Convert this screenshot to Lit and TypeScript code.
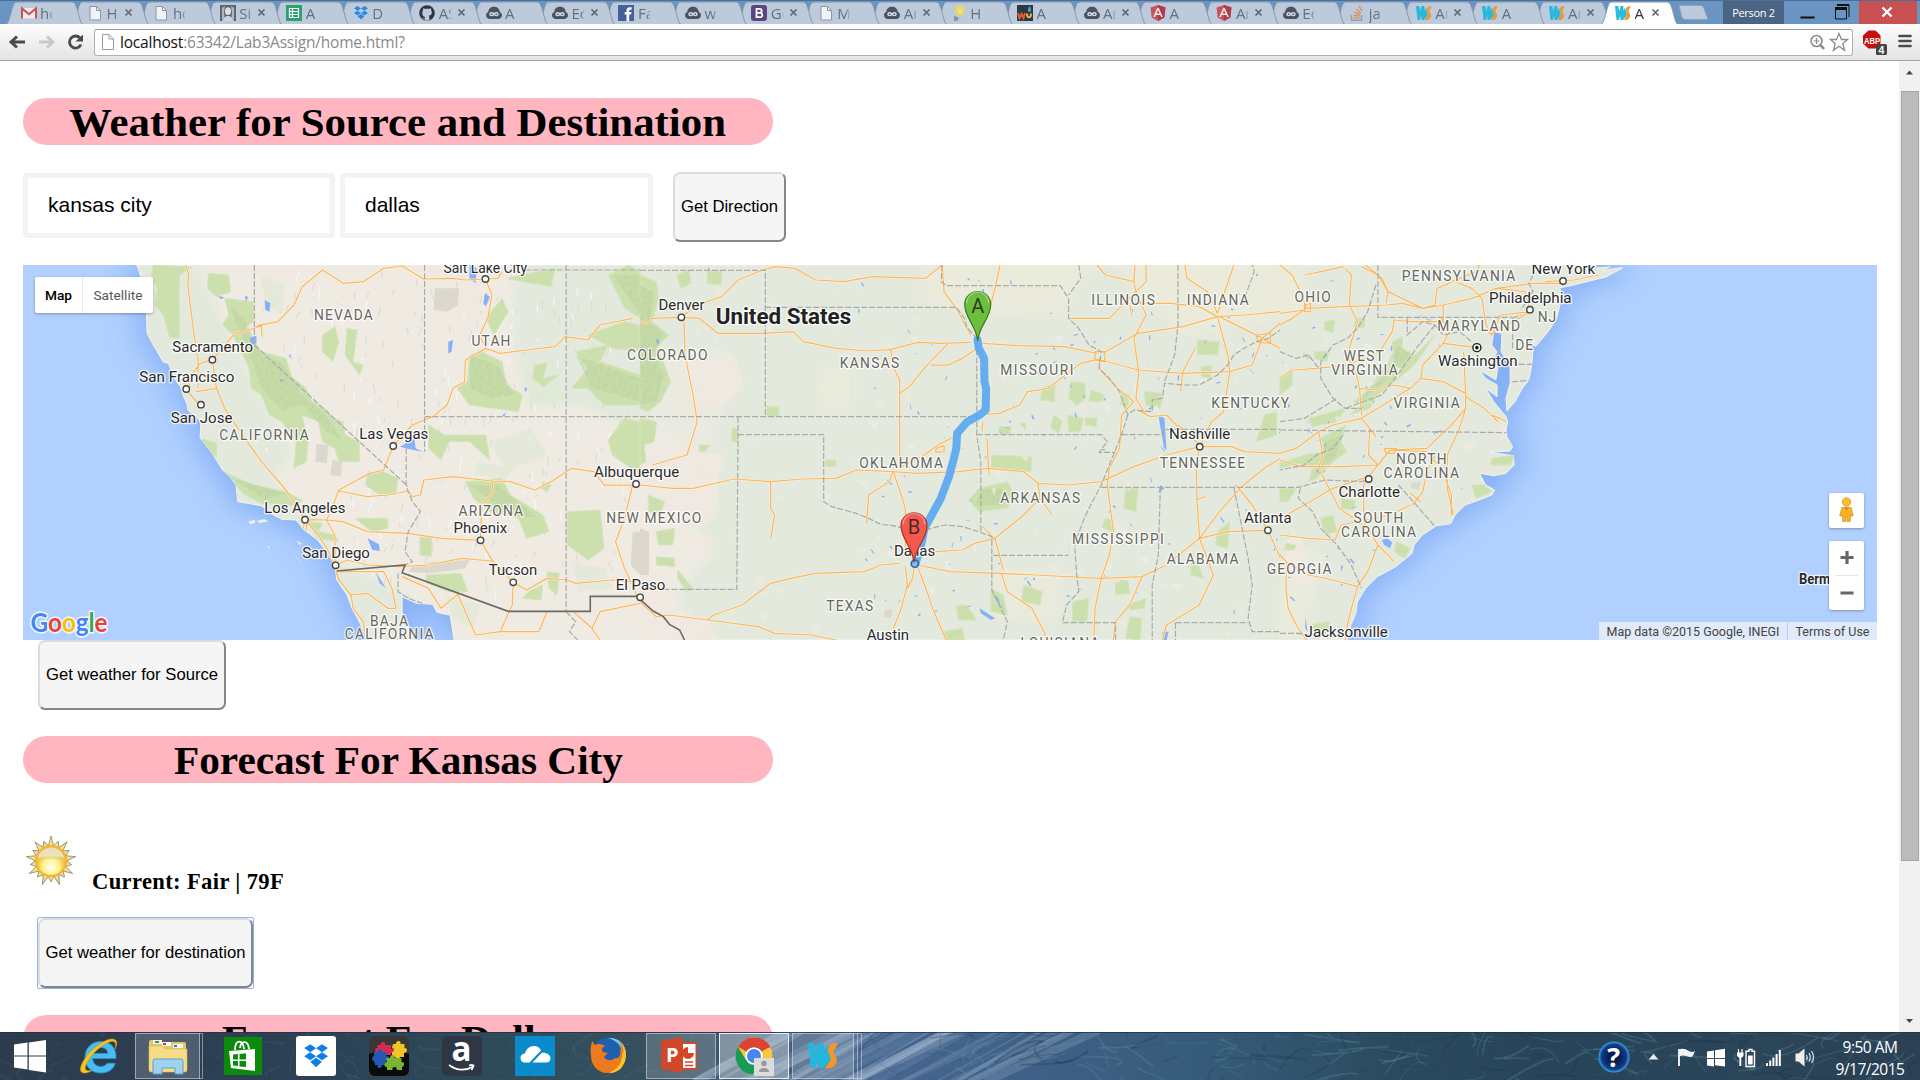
import { LitElement, html, svg, css, TemplateResult } from "lit";
import { customElement } from "lit/decorators.js";

/* ---------- small drawing helpers ---------- */

const rnd = (seed: number) => () => {
  seed = (seed * 1664525 + 1013904223) % 4294967296;
  return seed / 4294967296;
};

/* ---------- tab strip ---------- */

type Tab = { icon: string; text: string; close?: boolean; active?: boolean };
const TABS: Tab[] = [
  { icon: "gmail", text: "ho" }, { icon: "page", text: "Ho", close: true }, { icon: "page", text: "ho" },
  { icon: "photo", text: "Si", close: true }, { icon: "sheet", text: "A" }, { icon: "dropbox", text: "D" },
  { icon: "github", text: "AS", close: true }, { icon: "cloud", text: "A" }, { icon: "cloud", text: "Ec", close: true },
  { icon: "fb", text: "Fa" }, { icon: "cloud", text: "w" }, { icon: "boot", text: "Ge", close: true },
  { icon: "page", text: "M" }, { icon: "cloud", text: "An", close: true }, { icon: "bulb", text: "H" },
  { icon: "wu", text: "A" }, { icon: "cloud", text: "An", close: true }, { icon: "ng", text: "A" },
  { icon: "ng", text: "An", close: true }, { icon: "cloud", text: "Ec" }, { icon: "so", text: "ja" },
  { icon: "ws", text: "An", close: true }, { icon: "ws", text: "A" }, { icon: "ws", text: "An", close: true },
  { icon: "ws", text: "A", close: true, active: true },
];

const dropboxShape = (c: string) => svg`<path fill=${c} d="M4.6 1 8 3.4 4.5 5.7 1 3.3zM11.4 1 15 3.3 11.5 5.7 8 3.4zM1 8.1 4.5 5.7 8 8.1 4.6 10.5zM15 8.1 11.5 5.7 8 8.1 11.4 10.5zM4.6 11.3 8 9 11.4 11.3 8 14.6z"/>`;
const wsShape = svg`<path fill="#23b7dc" d="M0 0h3.4l.7 5L5.600 0h2.600l.5 5L9.800 1.500 12 9l-4 5H5.600L5 10l-1.200 4H1.500z"/><path fill="#f0982b" d="M15.800.2h-2.600C10.500 1.200 9.700 4.500 11.300 6.400c1.200 1.800.8 3.200-.6 4.600L9 14h2.800c3-1 4.300-4.500 2.600-6.700-1.300-1.800-.9-3.300.2-4.600z"/>`;

const FAV: Record<string, TemplateResult> = {
  gmail: svg`<path d="M1 3h14v10.500H1z" fill="#eee"/><path d="M1 13.500v-10l7 5.800 7-5.800v10" fill="none" stroke="#cc4b46" stroke-width="2"/>`,
  page: svg`<path d="M3 1.500h6.500L13.500 5.500v9.500H3z" fill="#f2f5f9" stroke="#8d949c"/><path d="M9.500 1.500v4h4" fill="none" stroke="#8d949c"/>`,
  photo: svg`<path d="M0 0h16v16H0z" fill="#5b6168"/><path d="M2 3l3-2-1 6 1 9H2zM11 1l3 2v13h-3l1-8z" fill="#aeb6bf"/><path d="M5 6c0-5 6-5 6 0 0 3-1 4-3 4S5 9 5 6z" fill="#dfe3e8"/><path d="M3.500 16c0-3.500 2-5 4.500-5s4.500 1.500 4.500 5z" fill="#cfd5dc"/>`,
  sheet: svg`<path d="M0 0h16v16H0z" fill="#23a06a"/><path d="M3.500 3.500h9v9h-9zM3.500 6.500h9M3.500 9.500h9M6.500 3.500v9" fill="none" stroke="#fff" stroke-width="1.200"/>`,
  dropbox: dropboxShape("#1f87e6"),
  github: svg`<circle cx="8" cy="8" r="7.800" fill="#2a2e33"/><path fill="#bccadb" d="M8 3.700c.8 0 1.500.1 2 .3 1-.7 1.700-.7 1.900-.6.3.7.200 1.200.1 1.600.9 1 1 2.700.5 4-.5 1.200-1.700 1.600-2.700 1.700.4.600.5 1 .5 1.800v3H5.700v-1.500C4 14.200 3.600 13 3 12.500c1-.2 1.500 1.300 2.800 1 0-.8.100-1.200.5-1.600-1-.2-2.300-.7-2.700-2C3 8 3.300 6 4.100 5c-.1-.4-.2-1 .1-1.600.2-.1.900-.1 1.800.6.600-.2 1.200-.3 2-.3z"/>`,
  cloud: svg`<path d="M4 14C1.500 14 0 12.300 0 10.300 0 8.500 1 7.500 2.300 7 2.300 3.800 4.800 1.800 8 1.800S13.700 3.800 13.700 7C15 7.500 16 8.500 16 10.300c0 2-1.500 3.700-4 3.700z" fill="#464e58"/><path d="M8 9.200C7 7.500 4 7.200 4 9.200s3 1.700 4 0c1-1.700 4-2 4 0s-3 1.700-4 0z" fill="none" stroke="#d9e0e8" stroke-width="1.400"/>`,
  fb: svg`<path d="M0 0h16v16H0z" fill="#3e5c9a"/><path d="M8.500 16V9.500H6.700V7h1.800V5.500C8.500 3.500 9.700 2.300 11.600 2.300h2v2.400h-1.400c-.8 0-1 .4-1 1.100V7h2.300l-.4 2.500h-1.900V16z" fill="#fff"/>`,
  boot: svg`<rect width="16" height="16" rx="3" fill="#563d7c"/><path d="M5.500 3.800h3.200a2 2 0 0 1 0 4H5.500zM5.500 7.800h3.600a2.200 2.200 0 0 1 0 4.400H5.500z" fill="none" stroke="#fff" stroke-width="1.800"/>`,
  bulb: svg`<circle cx="8.800" cy="5.500" r="5.300" fill="#ecd564"/><path d="M7 4l2 4 1.800-4" stroke="#fff3a8" fill="none"/><path d="M3 10.500l5 2.500-2 3H3z" fill="#8c9299"/>`,
  wu: svg`<path d="M0 0h16v16H0z" fill="#26323c"/><path d="M1 8l1.500 5L4.500 9l2 4L8 8" fill="none" stroke="#e2572d" stroke-width="2"/><path d="M10 8.500c0 5 4 5 4 0" fill="none" stroke="#f2b632" stroke-width="2"/><path d="M12.500 1c2 3 2.200 6 0 6s-2-3 0-6z" fill="#3aa7e0"/>`,
  ng: svg`<path d="M8 0l7.500 2.600-1.200 10L8 16l-6.300-3.400L.5 2.600z" fill="#c94a55"/><path d="M8 0l7.500 2.600-1.200 10L8 16z" fill="#b03540"/><path d="M8 3.200 4 12M8 3.200 12 12M5.800 9.200h4.500" stroke="#f4e6e8" stroke-width="1.600" fill="none"/>`,
  so: svg`<path d="M2.500 10v5.200h10V10" fill="none" stroke="#9b9b9b" stroke-width="1.400"/><path d="M4.500 12.800h6M4.600 10.300l6 .7M5.400 7.400l5.600 2M7.200 4.200l4.800 3.700M10 1.200l3.300 5" stroke="#e08a4e" stroke-width="1.300" fill="none"/>`,
  ws: svg`<g transform="translate(0 1)">${wsShape}</g>`,
};

/* ---------- map data: three side-by-side sheets, each 1568 x 1200 units ---------- */

type Label = [number, string, number, number, number, string];
const LABELS: Label[] = [
  [0, "Salt Lake City", 1086, 1291, 54, "city"], [0, "NEVADA", 769, 913, 196, "state"], [0, "UTAH", 1155, 1250, 273, "state"],
  [0, "Sacramento", 422, 620, 292, "city"], [0, "San Francisco", 341, 574, 381, "city"], [0, "San Jose", 418, 569, 503, "city"],
  [0, "CALIFORNIA", 537, 756, 554, "state"], [0, "Las Vegas", 880, 1049, 551, "city"], [0, "Albuquerque", 1455, 1664, 666, "city"],
  [0, "ARIZONA", 1123, 1281, 784, "state"], [0, "Phoenix", 1111, 1242, 835, "city"], [0, "Los Angeles", 647, 846, 773, "city"],
  [0, "San Diego", 740, 906, 909, "city"], [0, "Tucson", 1197, 1316, 959, "city"], [0, "El Paso", 1508, 1630, 1005, "city"],
  [0, "BAJA", 906, 999, 1112, "state"], [0, "CALIFORNIA", 844, 1062, 1153, "state"], [0, "NEW MEXICO", 1485, 1718, 805, "state"],
  [0, "COLORADO", 1536, 1733, 315, "state"],
  [1, "Denver", 45, 158, 165, "city"], [1, "United States", 185, 517, 208, "country"], [1, "KANSAS", 489, 635, 338, "state"],
  [1, "MISSOURI", 882, 1062, 361, "state"], [1, "ILLINOIS", 1105, 1261, 150, "state"], [1, "INDIANA", 1339, 1491, 150, "state"],
  [1, "KENTUCKY", 1399, 1590, 458, "state"], [1, "Nashville", 1296, 1446, 553, "city"], [1, "TENNESSEE", 1273, 1482, 638, "state"],
  [1, "OKLAHOMA", 537, 742, 638, "state"], [1, "ARKANSAS", 882, 1078, 743, "state"], [1, "MISSISSIPPI", 1058, 1283, 867, "state"],
  [1, "ALABAMA", 1290, 1466, 927, "state"], [1, "GEORGIA", 1535, 1694, 958, "state"], [1, "Atlanta", 1480, 1596, 804, "city"],
  [1, "TEXAS", 456, 571, 1068, "state"], [1, "Austin", 555, 659, 1154, "city"], [1, "LOUISIANA", 932, 1125, 1179, "state"],
  [1, "Dallas", 622, 723, 903, "city"],
  [2, "OHIO", 35, 124, 140, "state"], [2, "PENNSYLVANIA", 298, 576, 78, "state"], [2, "New York", 616, 772, 57, "city"],
  [2, "Philadelphia", 512, 714, 143, "city"], [2, "NJ", 631, 676, 201, "state"], [2, "MARYLAND", 385, 588, 228, "state"],
  [2, "DE", 576, 620, 285, "state"], [2, "WEST", 156, 254, 318, "state"], [2, "VIRGINIA", 125, 288, 360, "state"],
  [2, "Washington", 387, 582, 334, "city"], [2, "VIRGINIA", 278, 440, 458, "state"], [2, "NORTH", 284, 408, 627, "state"],
  [2, "CAROLINA", 253, 438, 669, "state"], [2, "Charlotte", 143, 294, 726, "city"], [2, "SOUTH", 180, 302, 805, "state"],
  [2, "CAROLINA", 149, 333, 847, "state"], [2, "Jacksonville", 60, 264, 1147, "city"], [2, "Berm", 1271, 1348, 988, "bold"],
];
const DOTS: [number, number, number][] = [
  [0, 1189, 72], [0, 520, 314], [0, 456, 402], [0, 492, 449], [0, 963, 573], [0, 1558, 687], [0, 747, 794], [0, 1177, 856],
  [0, 822, 931], [0, 1257, 982], [0, 1568, 1027], [1, 101, 187], [1, 1371, 575], [1, 1538, 826], [2, 693, 78], [2, 612, 164],
  [2, 217, 672],
];
const px = (k: number, x: number) => (x + 1568 * k - 56) / 2.45;
const py = (y: number) => (y - 30) / 3;

const LAND = "M335 30 350 85 347 130 358 170 360 235 375 270 385 290 400 322 412 325 428 372 442 395 448 420 458 448 460 465 492 498 490 548 520 595 545 645 563 665 578 690 582 740 640 752 670 780 690 793 725 795 745 825 778 855 800 890 820 930 825 975 850 1020 862 1060 880 1100 900 1155H1015L1000 1120 985 1085 985 1025 1020 1045 1060 1048 1070 1072 1102 1080 1108 1120 1112 1155H3300L3310 1110 3322 1075 3326 1040 3346 1000 3375 965 3420 935 3460 895 3465 870 3485 840 3520 812 3555 806 3565 780 3590 750 3625 735 3655 720 3662 705 3640 690 3625 655 3660 662 3690 655 3710 630 3708 602 3650 592 3700 588 3706 575 3692 545 3690 525 3694 500 3690 485 3660 440 3640 400 3668 425 3668 390 3640 370 3625 345 3665 375 3670 340 3660 310 3668 290 3655 270 3660 230 3680 235 3678 290 3700 335 3700 385 3690 430 3692 468 3712 440 3730 400 3746 375 3753 330 3756 285 3745 258 3728 230 3762 275 3774 258 3796 225 3814 190 3822 150 3826 118 3822 98 3850 92 3895 78 3935 66 3962 48 3976 38 3950 42 3925 48 3945 36 3900 40 3885 30Z";

const SHEET_FOREST = [
  "M375 30 470 35 440 60 438 120 440 250 415 248 400 180 378 150 385 100 370 60ZM510 55 560 60 565 110 530 125 508 100ZM550 130 620 140 622 200 600 215 640 290 700 310 715 365 750 400 765 440 800 465 815 490 840 500 845 540 880 560 880 620 830 620 820 580 790 560 780 500 740 480 755 560 750 620 720 640 725 560 690 500 660 480 640 420 615 400 610 340 570 240 545 210 560 180ZM540 645 620 690 700 710 740 735 725 752 640 745 600 720ZM495 550 530 565 530 605 500 590ZM900 660 930 645 975 670 970 715 930 720 895 690ZM790 240 820 215 830 260 815 320 790 290ZM850 220 875 225 865 320 890 330 880 360 845 300ZM870 790 950 790 950 820 910 830ZM1030 846 1058 848 1056 905 1028 900ZM1045 960 1130 955 1145 1010 1100 1010 1045 985ZM1140 680 1230 670 1250 720 1290 750 1330 780 1345 830 1290 850 1270 790 1200 770 1160 730ZM1050 510 1090 540 1190 540 1200 615 1150 560 1100 560 1080 615 1050 580ZM1120 400 1145 380 1150 300 1180 290 1230 320 1240 390 1280 420 1270 470 1150 450ZM1190 190 1230 130 1245 170 1210 240ZM1240 70 1360 40 1350 95 1280 80ZM1410 290 1490 270 1470 320 1568 360V450L1480 450 1440 400 1400 400 1440 340ZM1440 240 1530 200 1568 210V290L1500 280ZM1390 770 1470 765 1480 880 1440 915 1390 870ZM1490 555 1530 490 1568 500V660L1500 600ZM1310 330 1340 325 1330 370 1370 360 1330 395 1305 370ZM1490 60 1540 30 1568 50V190L1530 160 1510 110ZM1300 1005 1330 990 1325 1035 1280 1030ZM750 800 790 805 780 830 820 840 830 860 780 850ZM1340 950 1370 955 1365 1020 1345 1000ZM1330 680 1350 690 1340 712 1325 700Z",
  "M0 60 40 80 45 130 30 200 70 240 40 280 60 330 75 380 50 440 20 470 0 460ZM90 60 120 45 125 85 100 100ZM165 48 200 48 200 90 165 85ZM0 490 40 500 35 560 10 570 15 620 0 630ZM20 720 60 740 50 780 20 770ZM40 830 85 820 80 870 45 870ZM40 905 85 910 85 935 40 930ZM92 945 130 1000 115 1010 92 970ZM310 455 340 455 340 485 310 485ZM225 520 240 520 240 560 225 560ZM455 615 480 615 480 638 455 635ZM985 400 1018 385 1015 440 980 435ZM1055 380 1090 385 1092 430 1070 450 1050 430ZM1105 405 1138 420 1130 440 1100 440ZM1015 480 1035 500 1025 535 1005 515ZM1048 480 1085 490 1080 530 1050 530ZM1090 488 1120 490 1118 515 1092 510ZM880 515 910 515 905 540 880 535ZM930 505 945 505 945 525ZM862 600 960 605 958 650 860 640ZM830 700 900 680 920 720 900 760 830 770 805 735ZM1365 255 1420 260 1415 300 1365 298ZM1375 335 1400 330 1398 370 1375 365ZM1235 410 1280 415 1275 460 1240 450ZM1180 410 1200 420 1195 455 1178 450ZM1190 700 1220 700 1215 770 1185 760ZM1140 790 1160 795 1155 830 1132 815ZM1415 830 1445 800 1440 880 1410 870ZM1530 480 1560 470 1560 540 1510 560ZM1060 1040 1100 1030 1095 1100 1060 1100ZM940 990 985 1010 980 1050 935 1040ZM860 1000 890 1020 900 1080 860 1070ZM775 1050 800 1050 825 1095 780 1095ZM1200 1085 1230 1090 1225 1155 1190 1150ZM1165 985 1195 975 1200 1015 1165 1020ZM745 1130 790 1120 795 1155 745 1155ZM1350 920 1365 920 1380 970 1350 960ZM1195 1050 1240 1030 1235 1060 1200 1065ZM145 570 170 570 160 590 145 590Z",
  "M110 200 135 195 130 235 108 225ZM185 190 210 190 205 220 180 215ZM275 260 300 245 300 280 330 300 320 340 260 400 200 450 180 440 250 370 280 320ZM380 240 330 330 240 420 220 460 170 480 200 450 260 400 300 340ZM85 290 120 290 115 320 85 310ZM55 295 75 300 70 315ZM0 370 30 340 30 390 0 420ZM70 490 160 460 140 500 80 515ZM100 550 160 510 150 560 165 590 130 620 90 670 70 680 80 640 45 625 0 640V625L60 600 110 590ZM470 690 500 690 520 710 480 730ZM520 610 575 600 565 630 515 630ZM100 790 130 780 140 830 110 840ZM150 730 185 735 180 765 150 760ZM285 860 320 880 305 910 280 890ZM15 865 40 870 35 885 10 885ZM0 700 40 700 20 740 0 740ZM70 1110 120 1100 125 1145 90 1140Z",
];
const SHEET_BEIGE = [
  "M1160 60 1180 70 1170 160 1120 170 1130 110ZM1045 30 1075 30 1060 95Z",
  "M100 290 150 300 240 310 250 400 200 450 140 460 120 400ZM0 640 60 560 110 530 110 600 80 650 100 760 60 800 40 720ZM0 300 30 350 20 460 0 440ZM90 590 130 590 210 600 190 670 190 760 160 820 100 790 110 700ZM130 830 180 850 170 930 120 900ZM0 930 60 960 80 1060 170 1100 190 1155 0 1155Z",
  "M560 505 545 560 530 540ZM440 570 480 560 470 590ZM20 850 50 840 90 990 40 1000 10 900Z",
];
const SHEET_GREY = [
  "M1065 100 1125 100 1122 150 1095 170 1062 165ZM775 567 805 570 800 625 772 620ZM815 615 838 620 835 665 808 660ZM1010 935 1060 920 1150 915 1140 940 1060 955 1000 950ZM1550 830 1568 830V960L1545 930Z",
  "M0 820 22 830 22 960 0 960ZM600 1065 620 1065 615 1090 598 1085Z",
  "M320 685 345 680 340 705 322 700Z",
];
const SHEET_LAKE = [
  "M648 135 662 145 660 170 650 165ZM1150 30 1168 40 1165 85 1150 70ZM1188 115 1200 125 1190 155 1184 145ZM1098 260 1110 255 1106 290 1098 296ZM900 850 928 868 930 888 912 885ZM612 248 628 242 628 265 614 270ZM920 950 945 1000 930 985ZM980 575 1015 550 1018 580 1035 590 1000 582ZM535 122 550 128 540 132ZM600 122 608 126 602 140ZM1230 480 1240 472 1235 485ZM1285 395 1292 402 1286 412ZM455 408 470 420 488 445 480 440ZM685 372 696 374 688 382ZM710 295 714 310 708 305Z",
  "M832 1060 870 1090 860 1095 835 1075ZM865 1015 878 1030 885 1060ZM1270 480 1285 490 1290 585 1284 580ZM1275 690 1285 700 1270 715ZM1280 1130 1295 1130 1290 1155 1280 1155ZM1050 890 1055 855 1048 900ZM38 250 48 260 42 268Z",
  "M250 855 262 850 275 862 270 880 255 870ZM62 1085 68 1130 62 1120ZM150 930 155 935 150 950ZM375 530 400 525 385 535ZM90 640 98 655 90 652Z",
];
const SHEET_ROAD = [
  "M455 30 462 60 460 90 475 240 485 310M520 314 490 325 475 350 460 400M485 310 485 400M520 314 530 400 480 410M456 402 480 440 492 449M530 400 550 460 600 550 640 620 690 690 715 730 747 794M640 212 600 230 575 235 530 300 520 314M630 212 680 200 720 150 740 95 790 45 840 85 890 80 940 40 985 33 1038 72 1110 70 1140 75 1189 72 1220 70 1230 50M1189 72 1205 120 1195 190 1175 240 1190 280 1140 315 1138 380 1110 400 1095 450 1060 485 1010 510 963 573 940 645 905 655 830 705 810 770 800 795 747 794M1190 280 1225 295 1290 285 1360 275 1385 245 1440 255 1470 210 1550 190M830 708 900 725 950 720 1000 708 1010 725 1030 720 1038 675 1110 665 1205 678 1250 680 1310 705 1350 680 1400 640 1455 650 1480 690 1550 690M1205 678 1208 715 1180 750 1177 856M800 795 840 800 900 830 1000 835 1080 850 1177 856 1205 915 1257 982 1290 1005 1340 970 1390 975 1410 985 1500 975 1550 980M1205 918 1130 910 1050 930 980 935 900 930 850 915 822 931M747 794 780 840 800 880 822 931M800 795 820 840 822 930M747 800 742 820M752 800 750 825M822 945 830 975 860 1020 865 1060 890 1100 895 1155M860 1020 900 1015 950 1060 970 1060 960 1000 940 950 830 950M1125 1015 1080 1060 1050 1000 985 965M1257 990 1255 1050 1225 1130 1165 1140 1120 1015M1340 1070 1320 1130 1270 1130 1225 1130M1405 1070 1450 1120 1470 1070 1568 1045M1450 1120 1470 1155M1550 690 1530 790 1508 860 1530 940 1560 1020M640 212 642 245",
  "M0 200 20 205 30 190 101 187 140 150 200 125 240 75 300 45 330 35 380 40 430 75 500 80 570 65 700 70 740 30M101 187 145 190 190 235 300 235 375 230 400 260 480 280 560 288 615 283 680 262 740 265 810 262M108 200 110 300 130 420 140 500 115 600 30 630M810 240 780 170 745 110 740 30M850 190 870 100 882 30M615 283 618 330 636 375 636 640M636 415 660 395 700 335 755 265M820 285 790 310 755 330 712 330M840 265 930 272 1040 275 1120 295M1130 310 1080 325 1000 400 950 410 930 450 880 475 845 478M0 690 80 700 130 700 230 672 320 680 400 672 480 670 530 645 620 650 680 655 780 650 850 640 940 650 975 685 1050 690 1130 680 1210 635 1290 600 1371 575 1450 575 1480 590 1568 595M320 680 320 760 330 780 320 850M620 650 610 680 560 720 555 805M622 655 640 720 650 760 650 905M632 640 690 605 730 570 770 545M725 580 745 572 745 590 725 592 725 580M850 550 855 660M840 500 838 530M975 685 980 730 1010 780M980 730 940 780 870 850 820 865 790 885 720 890M870 850 890 945M840 815 870 855M680 930 760 950 880 955 970 960 1130 970 1230 965 1290 930 1371 850 1440 830 1538 826M635 925 590 930 550 950 430 955 370 970 320 985 250 1050 180 1080 165 1095 70 1080 40 1085 0 1040M165 1095 290 1115 330 1135 420 1140 480 1155M650 935 655 990 640 1060 610 1155M672 935 668 970 655 1000M680 935 700 1000 720 1070 750 1155M885 955 900 1010 960 1060 1000 1155M1130 970 1150 900 1160 830 1145 690 1150 640 1175 580 1180 480 1210 440 1170 400 1125 340 1125 310M1130 970 1115 1060 1112 1155M1230 965 1200 1050 1165 1100 1160 1155M1371 850 1405 960 1370 1050 1290 1110 1280 1155M1371 850 1365 740 1363 640 1371 575M1363 735 1385 725M1371 850 1420 770 1470 700 1530 640 1568 610M1371 575 1400 500 1430 470 1445 350 1440 300 1415 185M1320 510 1371 570M1220 465 1250 485 1290 480 1330 530M1210 80 1215 110 1150 190 1055 190M1215 110 1240 180 1210 250 1222 350 1215 430 1240 480M1120 30 1140 60 1210 80 1213 30M1215 110 1240 80 1240 30M1215 145 1300 145 1370 155 1415 185 1480 180 1568 170M1135 295 1220 235 1330 215 1415 185M1130 315 1220 345 1330 355 1445 350 1500 330 1525 250 1420 185M1335 30 1340 70 1390 110 1415 175 1430 120 1455 30M1325 408 1330 350 1360 280M1525 250 1568 205M1525 250 1568 280M1538 826 1500 750 1460 690M1538 826 1568 905M1510 240 1545 235 1545 265 1515 262ZM1115 290 1140 290 1138 320 1115 315ZM1200 150 1205 180",
  "M0 210 30 190 65 160 160 155 260 150 300 145 350 160 400 150 470 130 530 100 620 85 693 85M0 175 60 165M65 160 50 110 30 60 0 30M160 40 175 60 170 150 190 200 180 240 165 300 190 370 195 400 200 480M155 35 100 50 60 60M200 35 240 60 265 110 350 160 380 150 385 100 480 50 490 30M260 145 265 110 250 70 210 30M530 100 600 110 612 164M612 170 585 190 515 240M520 240 505 210 495 130 470 100 420 75M400 150 400 200 320 200 280 195 275 230 245 290 165 330 90 340 30 345 0 370M482 278 400 265 350 330 345 370 320 400 240 460 200 490 130 510 95 530 40 580 0 595M400 265 415 230 395 190M345 370 400 380 455 415 450 290M455 415 455 460 420 510 360 580 270 585 240 630 217 665 130 700 60 750 0 790M455 425 500 460 535 500 525 490M520 480 555 500M455 460 440 520 410 600 410 700 425 780M380 600 360 650 350 710 325 750M270 585 360 590 400 650 420 720 420 780M200 490 220 520 217 600 240 630 160 635 50 635 0 615M220 520 235 545M195 400 230 405 280 390 320 400M217 665 205 690 205 800 240 870 280 920M95 530 105 600 95 640 120 700 145 760 210 815M0 840 70 850 135 855 150 810 270 780 320 750M240 870 215 950 190 995 175 1060 165 1110 160 1155M0 900 15 920 15 1000 20 1060 40 1110 65 1155M15 920 70 960 130 975 190 995M320 715 345 740M60 150 75 145 75 170 60 170ZM255 580 285 580 280 595 260 595ZM650 80 720 75 780 60M510 230 520 240 540 180 612 170",
];
const SHEET_BORDER = [
  "M623 30V270L1000 695M1040 30V590M1040 485H1568M1387 30V1070M1285 45H1568M995 580V695L1010 740 1030 770 1010 810 1000 830 992 890 1010 920 992 930M975 955 975 1010 1000 1030 1040 1048M1387 1070 1410 1100 1395 1130 1415 1155",
  "M0 46H307V485M168 38V46M0 485H820M307 157H775L795 190 800 215 825 250V540L835 620V830M240 485V540L237 1003H60M240 539H450V740L470 755 500 765 530 775 560 790 590 808 620 812 640 818M700 825 730 815 750 810 790 815 830 830 862 845V1005L880 1050 900 1100 890 1155M825 539H1130L1145 560 1125 592H1165M740 30 738 80 750 92H1030L1050 130 1050 190 1075 220 1100 270 1130 290 1125 340 1150 370 1175 410 1195 480 1210 465 1255 470 1255 435 1280 430 1285 385 1330 390 1370 390 1415 360 1440 330 1455 300 1480 280 1510 260 1540 250 1568 225M1318 30V210L1310 300 1285 380M1075 30 1080 70 1050 120M1195 480 1180 539 1160 600 1130 690 1100 760 1085 800 1065 870 1070 960 1075 1010 1045 1050 1035 1103H1165V1155M1180 539H1280L1285 523H1568M1130 697H1568M1275 697 1270 900 1255 990V1155M1455 697 1490 910 1500 990 1490 1090 1500 1130H1568M1312 1103H1490M1312 1103V1155M865 901H1050M1475 150 1505 50 1500 30",
  "M240 30V187H570M570 190V285M235 90 215 170 190 220 165 250 130 270 100 320 100 370 130 430 160 460 200 460M312 190V240L350 200 380 210 400 240 440 230 470 260M380 210 340 270 300 340 250 420 160 460M0 525 130 527 565 533M0 290 40 310 70 300 95 340M0 500 60 490 140 430M155 540 130 580 90 600 60 630 0 645M0 697H45L110 675 200 680 225 670M290 690 320 730 380 815M50 700 45 730 80 770 100 820 140 870 175 930 200 1000M585 328H620M530 385 610 376M620 60 610 85 620 110 590 165M570 190 590 180M40 1135 80 1140M0 1135H60",
];

const randomSpecks = () => {
  const r = rnd(7);
  const out: TemplateResult[] = [];
  for (let i = 0; i < 170; i++) {
    const x = 2100 + r() * 1480;
    const y = 45 + r() * 1100;
    const dx = (r() - 0.3) * 16;
    const dy = (r() - 0.3) * 22;
    out.push(svg`<path d=${`M${x} ${y}l${dx} ${dy}`} stroke="#83b0f8" stroke-width=${0.6 + r()} fill="none"/>`);
  }
  for (let i = 0; i < 130; i++) {
    const x = 1700 + r() * 1750;
    const y = 40 + r() * 1100;
    const w = 8 + r() * 22;
    out.push(svg`<path d=${`M${x} ${y}l${w} ${(r() - 0.5) * 30} ${-w * 0.3} ${10 + r() * 26}z`} fill=${r() > 0.4 ? "#ecebdc" : "#efece4"} opacity=".75"/>`);
  }
  return out;
};
const reliefStrokes = () => {
  const r = rnd(21);
  const out: TemplateResult[] = [];
  for (let i = 0; i < 330; i++) {
    const x = 640 + r() * 900;
    const y = 40 + r() * 980;
    if (y > 600 && x < 860) continue;
    out.push(svg`<path d=${`M${x} ${y}l${(r() - 0.6) * 12} ${8 + r() * 24}`} stroke=${r() > 0.5 ? "#e1dcd2" : "#f8f5ef"} stroke-width="1.300" fill="none"/>`);
  }
  return out;
};

const pin = (x: number, y: number, fill: string, edge: string, letter: string) => svg`
  <g transform=${`translate(${x} ${y})`}>
    <path d="M0 0C-1.500-16-13-23-13-36.500A13 13 0 0 1 13-36.500C13-23 1.500-16 0 0Z" fill=${fill} stroke=${edge} stroke-width="1.200"/>
    <path d="M-11-38A11 11 0 0 1 11-38" fill="none" stroke="#fff" stroke-opacity=".35" stroke-width="1.500"/>
    <text class="pin" x="0" y="-28" text-anchor="middle">${letter}</text>
  </g>`;

@customElement("route-map")
class RouteMap extends LitElement {
  static styles = css`
    :host { display: block; position: relative; width: 1854px; height: 375px; overflow: hidden; background: #b1d0ff; font-family: Roboto, "Liberation Sans", sans-serif; }
    .layer { position: absolute; inset: 0; width: 1854px; height: 375px; }
    .geo path { vector-effect: non-scaling-stroke; }
    text { paint-order: stroke; stroke: #fff; stroke-opacity: .8; stroke-width: 2.600px; stroke-linejoin: round; }
    .city { font-size: 14.600px; fill: #2b2b2b; }
    .bold { font-size: 14px; font-weight: 700; fill: #2b2b2b; }
    .state { font-size: 13.800px; fill: #66665f; }
    .country { font-size: 22px; font-weight: 700; fill: #222; }
    .pin { font-size: 20px; fill: #222; fill-opacity: .85; stroke: none; }
    .logo { font-family: Lato, sans-serif; font-size: 27px; font-weight: 700; stroke-width: 3px; stroke-opacity: .9; }
    .types { position: absolute; left: 12px; top: 12px; height: 36px; display: flex; align-items: center; background: #fff; border-radius: 2px; box-shadow: 0 1px 3px rgba(0,0,0,.3); font-size: 13.700px; color: #565656; }
    .types span { box-sizing: border-box; height: 36px; line-height: 36px; text-align: center; width: 70px; }
    .types .on { width: 48px; color: #000; font-weight: 500; border-right: 1px solid #e8e8e8; }
    .side { position: absolute; right: 13px; top: 228px; width: 35px; display: flex; flex-direction: column; gap: 13px; }
    .box { background: #fff; border-radius: 2px; box-shadow: 0 1px 3px rgba(0,0,0,.3); }
    .box svg { display: block; }
    .terms { position: absolute; right: 0; bottom: 0; height: 18px; display: flex; gap: 1px; font-size: 12.500px; line-height: 19px; color: #444; white-space: nowrap; }
    .terms span { background: rgba(245,245,245,.7); text-align: center; width: 89px; height: 18px; }
    .terms .data { width: 188px; }
  `;
  render() {
    const sheets = (data: string[], attrs: (d: string) => TemplateResult) =>
      data.map((d, k) => svg`<g transform=${`translate(${1568 * k} 0)`}>${attrs(d)}</g>`);
    return html`
      <svg class="layer geo" viewBox="56 30 4543 1125" preserveAspectRatio="none">
        <defs>
          <clipPath id="land"><path d=${LAND} /></clipPath>
          <filter id="soft" x="-10%" y="-10%" width="120%" height="120%"><feGaussianBlur stdDeviation="40 36" /></filter>
          <filter id="soft2"><feGaussianBlur stdDeviation="14" /></filter>
          <filter id="relief" x="0" y="0" width="100%" height="100%">
            <feTurbulence type="fractalNoise" baseFrequency=".09 .07" numOctaves="3" seed="4" result="n" />
            <feDiffuseLighting in="n" surfaceScale="2" lighting-color="#fff" result="l"><feDistantLight azimuth="225" elevation="62" /></feDiffuseLighting>
            <feComposite in="l" in2="SourceGraphic" operator="in" result="c" />
            <feBlend in="SourceGraphic" in2="c" mode="multiply" />
          </filter>
        </defs>
        <path d=${LAND} fill="#7eaaf4" stroke="#7eaaf4" stroke-width="14" filter="url(#soft)" opacity=".85" />
        <path d=${LAND} fill="#e3e9dd" stroke="#f3f2ee" stroke-width="1" />
        <g clip-path="url(#land)">
          <path filter="url(#soft2)" d="M470 0 560 230 640 420 720 600 660 680 750 760 850 930 980 1000 1100 1160H1700L1660 1010 1740 900 1680 760 1730 640 1640 540 1500 500 1420 450 1300 460 1260 300 1260 0Z" fill="#efebe3" />
          <path filter="url(#soft2)" d="M1590 280H1790V420L1730 620 1680 900H1600Z" fill="#efebe3" opacity=".6" />
          <path filter="url(#soft2)" d="M2250 0H2700L2600 200 2250 150ZM2700 0H3200V180L2900 250ZM3150 850 3250 900 3200 1150H3120ZM2000 330H2090V480H2000ZM2440 940H2600V1100H2440Z" fill="#ebebdb" opacity=".8" />
          ${reliefStrokes()}
          ${sheets(SHEET_BEIGE, (d) => svg`<path d=${d} fill="#efe9e1"/>`)}
          <g opacity=".7">${sheets([
            "M640 60 700 90 690 180 650 150ZM1200 560 1300 520 1340 600 1240 650ZM1400 920 1480 940 1500 1000 1420 1010ZM1170 620 1260 640 1240 670 1160 660ZM500 160 560 240 540 300 500 260ZM1290 340 1360 300 1380 440 1300 450ZM1090 1020 1180 1050 1160 1120 1110 1090Z", "", ""],
            (d) => svg`<path d=${d} fill="#dfe8d6"/>`)}</g>
          ${sheets(SHEET_GREY, (d) => svg`<path d=${d} fill="#dcd9cc"/>`)}
          ${sheets(SHEET_FOREST, (d) => svg`<path d=${d} fill="#cbe0ad" stroke="#d5e4bf" stroke-width="1"/>`)}
          ${sheets([
            "M560 150 600 190 640 300 690 320 740 420 800 480 840 560 800 530 740 450 690 470 640 400 620 330ZM1150 300 1220 330 1260 420 1200 430 1150 400ZM1410 300 1568 370V440L1450 400ZM1500 60 1568 60V180ZM1150 690 1220 690 1320 790 1250 780ZM560 665 700 715 650 735Z",
            "M0 90 35 110 25 200 60 240 30 300 60 360 40 440 0 450ZM840 700 890 700 890 750 820 750Z",
            "M290 270 320 300 240 400 190 450ZM110 560 150 540 140 600 90 650Z"],
            (d) => svg`<path d=${d} fill="#c4dca4" filter="url(#relief)" opacity=".4"/>`)}
          ${randomSpecks()}
          ${sheets(SHEET_LAKE, (d) => svg`<path d=${d} fill="#85b1fb"/>`)}
          ${sheets(SHEET_ROAD, (d) => svg`<path d=${d} fill="none" stroke="#fff4dc" stroke-width="2.200" stroke-linejoin="round"/>`)}
          ${sheets(SHEET_ROAD, (d) => svg`<path d=${d} fill="none" stroke="#f9b763" stroke-width="1.250" stroke-linejoin="round"/>`)}
          ${sheets(SHEET_BORDER, (d) => svg`<path d=${d} fill="none" stroke="#aaaaa8" stroke-width="1.200" stroke-dasharray="6 2"/>`)}
        </g>
        <path d="M608 800l16-5 0 8-10 4zM630 798l18-5 8 6-20 4zM728 858l10 8-4 3zM655 875l6 2-3 3zM724 905l12 14" fill="#eef1ea" stroke="#eef1ea" stroke-width=".5" />
        <path d="M825 948 992 930 985 953 1245 1069H1446V1024H1568" fill="none" stroke="#6a6a66" stroke-width="1.600" />
        <path d="M1571 1036 1600 1068 1625 1085 1640 1108 1665 1125 1677 1155" fill="none" stroke="#6a6a66" stroke-width="1.600" />
        <path d="M2395 255 2398 280 2411 310 2412 380 2416 400 2415 465 2400 480 2370 500 2345 535 2343 580 2335 620 2325 665 2305 730 2285 775 2265 820 2255 880 2243 925" fill="none" stroke="#5aa7f2" stroke-opacity=".92" stroke-width="8" stroke-linejoin="round" stroke-linecap="round" />
      </svg>
      <svg class="layer">
        ${LABELS.map(([k, t, a, b, y, c]) => svg`<text class=${c} x=${px(k, a)} y=${py(y)} textLength=${(b - a) / 2.45} lengthAdjust=${c === "state" ? "spacing" : "spacingAndGlyphs"}>${t}</text>`)}
        ${DOTS.map(([k, x, y]) => svg`<circle cx=${px(k, x)} cy=${py(y)} r="3.200" fill="#fff" stroke="#444" stroke-width="1.400"/>`)}
        <circle cx=${px(2, 482)} cy=${py(278)} r="4" fill="#fff" stroke="#222" stroke-width="1.400" />
        <circle cx=${px(2, 482)} cy=${py(278)} r="1.800" fill="#111" />
        <circle cx=${px(1, 673)} cy=${py(926)} r="3.600" fill="#7fbdf5" stroke="#1f66a8" stroke-width="1.600" />
        ${pin(px(1, 827), py(258), "#6cbf3a", "#3c7a1a", "A")}
        ${pin(px(1, 671), py(922), "#f6584c", "#a4312a", "B")}
        <text class="logo" x="7.500" y="367" textLength="77" lengthAdjust="spacingAndGlyphs"><tspan fill="#4285f4">G</tspan><tspan fill="#ea4335">o</tspan><tspan fill="#fbbc05">o</tspan><tspan fill="#4285f4">g</tspan><tspan fill="#34a853">l</tspan><tspan fill="#ea4335">e</tspan></text>
      </svg>
      <div class="types"><span class="on">Map</span><span>Satellite</span></div>
      <div class="side">
        <div class="box"><svg width="35" height="35"><circle cx="17.500" cy="9" r="4.200" fill="#fbbe2c" stroke="#d6942a" stroke-width=".8"/><path d="M13 14.500h9l2.300 8-2.200.8-.8-2V28.500h-3.200v-5h-1.200v5h-3.200V21.300l-.8 2-2.200-.8z" fill="#fbb324" stroke="#d6942a" stroke-width=".8"/><path d="M15 14.500h5L17.500 17.500z" fill="#e8801c"/></svg></div>
        <div class="box"><svg width="35" height="69"><path d="M11.500 16.500h13M18 10v13M11.500 52h13" stroke="#666" stroke-width="3.200"/><path d="M6 34.500h23" stroke="#e6e6e6"/></svg></div>
      </div>
      <div class="terms"><span class="data">Map data ©2015 Google, INEGI</span><span>Terms of Use</span></div>`;
  }
}

@customElement("browser-chrome")
class BrowserChrome extends LitElement {
  static styles = css`
    :host { display: block; font-family: "Open Sans", "Noto Sans", sans-serif; }
    .strip { height: 24px; background: #6a94c2; border-top: 1px solid #4a6f9b; box-sizing: border-box; display: flex; padding-left: 6px; position: relative; overflow: hidden; }
    .tab { position: relative; width: 66.440px; height: 23px; flex: none; display: flex; align-items: center; box-sizing: border-box; padding-left: 14.500px; isolation: isolate; }
    .shape { position: absolute; left: 0; top: 0; z-index: -1; overflow: visible; }
    .fav { flex: none; width: 16px; height: 16px; opacity: .95; }
    .name { width: 13px; margin-left: 3.500px; font-size: 15px; line-height: 22px; color: #66707c; overflow: hidden; white-space: nowrap; -webkit-mask-image: linear-gradient(90deg, #000 70%, transparent); flex: none; }
    .active .name { color: #333; }
    .x { flex: none; margin-left: 5px; }
    .active .x { margin-left: 3.500px; }
    .new { margin-left: 10px; flex: none; }
    .spring { flex: 1; }
    .person { height: 23px; width: 61px; background: #4a6583; color: #fff; font-size: 11px; line-height: 24px; text-align: center; flex: none; letter-spacing: -.3px; }
    .win { display: flex; flex: none; }
    .bar { height: 37px; box-sizing: border-box; border-bottom: 1px solid #a3a3a3; background: linear-gradient(#fdfdfd, #e4e4e4); display: flex; align-items: center; padding: 0 6px 0 8px; }
    .nav { flex: none; width: 86px; height: 26px; }
    .omni { flex: none; width: 1759px; height: 27px; box-sizing: border-box; background: #fff; border: 1px solid #b0b0b0; border-top-color: #9a9a9a; border-radius: 3px; display: flex; align-items: center; padding: 0 3px 0 5px; }
    .url { font-size: 15.500px; color: #8a8a8a; margin-left: 4px; letter-spacing: -.2px; flex: 1; line-height: 22px; }
    .url b { font-weight: 400; color: #111; }
    .tools { flex: none; margin-left: 9px; }
  `;
  render() {
    return html`
      <div class="strip">
        ${TABS.map((t, i) => html`
          <div class="tab ${t.active ? "active" : ""}" style="z-index:${t.active ? 60 : 40 - i}">
            <svg class="shape" width="77" height="23"><path d="M0 23.500C2 22.500 3 19 5 12 7 4 8 1 11 1H66C69 1 70 4 72 11 74 19 75 22.500 77 23.500Z" fill=${t.active ? "#fdfdfd" : "#bccadb"} stroke="#8496ab" stroke-width="1"/></svg>
            <svg class="fav" viewBox="0 0 16 16">${FAV[t.icon]}</svg>
            <span class="name">${t.text}</span>
            ${t.close ? html`<svg class="x" width="9" height="9"><path d="M1.500 1.500l6 6M7.500 1.500l-6 6" stroke="#5f6873" stroke-width="1.700"/></svg>` : ""}
          </div>`)}
        <svg class="new" width="32" height="23"><path d="M2 4.500H23C25 4.500 26 5 27 7.500L31 18.500H9C6.500 18.500 5.500 17.500 4.500 15Z" fill="#bccadb" stroke="#8ea3bb"/></svg>
        <span class="spring"></span>
        <span class="person">Person 2</span>
        <svg class="win" width="136" height="23"><path d="M51.500 6.500h11V18H51.500zM53 4h12v12" fill="none" stroke="#111" stroke-width="1"/><path d="M16.500 15.500h14v2H16.500zM51 6h12v3H51zM53 3h12v2H53z" fill="#111"/><path d="M75 -1h58v24H75z" fill="#c75050"/><path d="M98.500 6.500l9 9M107.500 6.500l-9 9" stroke="#fff" stroke-width="2.400"/></svg>
      </div>
      <div class="bar">
        <svg class="nav" viewBox="0 0 86 26" fill="none">
          <path d="M17 13H4M9 7.500 3 13l6 5.500" stroke="#4b4b4b" stroke-width="3"/>
          <path d="M31 13H44M39 7.500 45 13l-6 5.500" stroke="#c9c9c9" stroke-width="3"/>
          <path d="M72 9A6 6 0 1 0 73 15.500" stroke="#4b4b4b" stroke-width="2.800"/><path d="M75 5.500V12.500H67.500Z" fill="#4b4b4b"/>
        </svg>
        <div class="omni">
          <svg width="16" height="18"><path d="M2.500 1.500H9L13.500 6V16.500H2.500Z" fill="#fff" stroke="#9a9a9a"/><path d="M9 1.500V6H13.500" fill="none" stroke="#9a9a9a"/></svg>
          <span class="url"><b>localhost</b>:63342/Lab3Assign/home.html?</span>
          <svg width="42" height="22" fill="none" stroke="#8b8b8b"><circle cx="9.500" cy="10" r="5.500" stroke-width="1.600"/><path d="M6.500 10h6M9.500 7v6" stroke-width="1.200"/><path d="M13.500 14l3.500 4" stroke-width="2.600"/><path d="M32 2.500l2.500 6h6l-4.700 4.200 1.800 6.600-5.600-4-5.600 4 1.800-6.600-4.700-4.200h6z" stroke-width="1.300"/></svg>
        </div>
        <svg class="tools" width="52" height="30">
          <path d="M6.500 3.500h7l5 5v8l-5 5h-7L1 16.500v-8z" fill="#c70d0d"/>
          <text x="2" y="16.500" font-family="Liberation Sans" font-weight="700" font-size="9.500" textLength="16" lengthAdjust="spacingAndGlyphs" fill="#fff">ABP</text>
          <rect x="14" y="17" width="11" height="11" rx="1.500" fill="#444"/><text x="16.500" y="26.500" font-family="Liberation Sans" font-weight="700" font-size="10.500" fill="#fff">4</text>
          <path d="M37.500 9h11M37.500 14h11M37.500 19h11" stroke="#4b4b4b" stroke-width="2.600" stroke-linecap="round"/>
        </svg>
      </div>`;
  }
}

const TASKS: { kind: string; art: TemplateResult }[] = [
  { kind: "wide", art: svg`<path d="M3 12.500 16.500 10.600V23.500H3zM17.800 10.400 35 8V23.500H17.800zM3 24.600H16.500V37.500L3 35.500zM17.800 24.600H35V40.500L17.800 38z" fill="#fff"/>` },
  { kind: "ie", art: svg`<path d="M38 26.500H14.500C15 32 18.500 34.500 23 34.500c3 0 5-1.200 6.200-3.200h8C35.500 37.500 30 41 23 41 13.500 41 7 35 7 25.500S13.500 9.500 23 9.500C33 9.500 38.500 16 38 26.500ZM14.600 21.500H30C29.500 17.500 26.500 15.500 22.500 15.500s-7.200 2.200-7.900 6Z" fill="#46bdf0" stroke="#2a94cf" stroke-width=".8"/><path d="M37 17C42 8 36 4 26 9.500 13 16 2 31 2.500 38 3 42 8 42 14 38.500 6 40 5.500 36 10.500 28 16 19 27 11 33 9.500c5-1 5.500 3 4 7.500z" fill="#f5c51c" stroke="#d79a0f" stroke-width=".6"/>` },
  { kind: "frame one", art: svg`<path d="M1 10q0-2 2-2h9l2 2h22q2 0 2 2v26H1z" fill="#e5c667"/><path d="M5 8h9v4H5zM14 10h9v4h-9zM25 12h10v4H25z" fill="#f8f8f2"/><path d="M7 9h4v2H7z" fill="#3c9a4b"/><path d="M15 11h3v2h-3z" fill="#d43b33"/><path d="M26 13h3v2h-3z" fill="#2f7fd0"/><path d="M1 14h14l2 3h22v21q0 2-2 2H3q-2 0-2-2z" fill="#f6dd85" stroke="#d9b754" stroke-width=".6"/><path d="M5 42V29q0-2 2-2H33q2 0 2 2V42H27V36H14V42Z" fill="#9dd3f0" stroke="#5c9fc6"/>` },
  { kind: "", art: svg`<path d="M1 5h38v38H1z" fill="#0b8a0b"/><path d="M6 19l26-2v22L8 36z" fill="#fff"/><path d="M12 18c0-11 8-11 9-1M17 16c1-8 8-8 9 1" fill="none" stroke="#fff" stroke-width="1.800"/><path d="M10 22.500l5-.5v5.500h-5zM16.500 22l6.500-.7v6.200h-6.500zM10 29h5v5l-5-.6zM16.500 29H23v6l-6.500-.6z" fill="#0b8a0b"/>` },
  { kind: "", art: svg`<rect y="4" width="40" height="40" rx="3" fill="#fff"/><g transform="translate(6.500 10.500) scale(1.700)">${dropboxShape("#0f7fe5")}</g>` },
  { kind: "", art: svg`<rect y="4" width="40" height="40" rx="6" fill="#0b0b0c"/><path d="M0 22q20-8 40 0V10q0-6-6-6H6q-6 0-6 6z" fill="#555" opacity=".6"/><path d="M8 13h4q-1-3 2-3t2 3h6v4q3-1 3 2t-3 2v2h-5q1 3-2 3t-2-3H9v-3q-3 1-3-2t3-2z" fill="#d8294f"/><path d="M24 12h3q0-3 2.500-3t2 3h4v4q3 0 2.500 2.500T35 21v4h-4q0 3-2.500 3t-2-3H23v-5q2 0 2-2t-2-2z" fill="#f0c422"/><path d="M5 20h4q0-3 2.500-3t2 3h4v4q3 0 2.500 2.500T17 29v4h-4q0 3-2.500 3t-2-3H6l-1-4q-2 0-2-2.500T5 24z" fill="#2458b5"/><path d="M17 26h4q0-3 2.500-3t2 3h7v4q3 0 2.500 2.500T33 35v3h-5q0-3-2.500-3t-2 3H18v-3q-3 0-2.500-2.500T18 30z" fill="#78b531"/>` },
  { kind: "", art: svg`<rect y="4" width="40" height="40" rx="5" fill="#2e3743"/><text x="9.500" y="29" font-family="Open Sans, sans-serif" font-weight="700" font-size="34" textLength="20" lengthAdjust="spacingAndGlyphs" fill="#fff">a</text><path d="M7 33c8 6 17 6 24 1.500M27 33.500c3-1 5-.5 4.500.5s-1 2.500-2 4" fill="none" stroke="#fff" stroke-width="1.700"/>` },
  { kind: "", art: svg`<path d="M0 4h40v40H0z" fill="#0a8bcb"/><path d="M5.500 26c0-3 2-4.500 4.500-4.500C11 17 14.500 14 19 14c3.500 0 6 2 7 4.500L14.500 30.500H10c-3 0-4.500-2-4.500-4.500zM17.500 30.500l9-9.500c5-1 9 2 9 5.500 0 2.500-2 4-4 4z" fill="#fff"/>` },
  { kind: "", art: svg`<circle cx="21" cy="22.500" r="17" fill="#1f5fae"/><path d="M20 6c10-1 18 6 18 16l-5-5C32 11 26 8 20 6z" fill="#79c6ef"/><path d="M4 9l3 4c3-2 8-1 10 1-3 1-4 4-2 6l5 1-4 4c2 4 8 4 11 1 5 1 6-4 5-9 3 4 1-6-1-8 7 4 8 14 5 20-3 8-10 12-17 12C10 41 3 33 3 24 2 18 3 13 4 9z" fill="#ee7a1e"/><path d="M33 10c6 7 7 17 1 25-3 4-8 6-13 6 9-4 14-11 13-20 2 3 2-5-1-11z" fill="#f9c42d"/>` },
  { kind: "frame", art: svg`<path d="M20 10h16v28H20z" fill="#d24726"/><path d="M22 12h12.500v24H22z" fill="#fff"/><path d="M24 30h8M24 33.500h8" stroke="#d24726" stroke-width="1.500"/><path d="M27 15v6h6a6 6 0 1 1-6-6z" fill="#d24726"/><path d="M0 9l21-4v36L0 37z" fill="#d24726"/><text x="5" y="30" font-family="Open Sans, sans-serif" font-weight="700" font-size="20" fill="#fff">P</text>` },
  { kind: "frame lit", art: svg`<circle cx="20" cy="24" r="18.500" fill="#fbc53c"/><path d="M20 24 4 14.700A18.500 18.500 0 0 1 36 14.700z" fill="#da4437"/><path d="M20 5.500A18.500 18.500 0 0 1 36.500 15.500H20z" fill="#da4437"/><path d="M4 14.700A18.500 18.500 0 0 0 19 42.500L27 28 20 24 12 28z" fill="#179b55"/><circle cx="20" cy="24" r="8.800" fill="#fff"/><circle cx="20" cy="24" r="7" fill="#4588f0"/><path d="M20 26h20v18H20z" fill="#dcdcdc"/><circle cx="30" cy="31.500" r="2.800" fill="#999"/><path d="M25 40q0-4 5-4t5 4z" fill="#999"/>` },
  { kind: "frame three", art: svg`<g transform="translate(3 11) scale(1.900 1.800)">${wsShape}</g>` },
];

@customElement("task-bar")
class TaskBar extends LitElement {
  static styles = css`
    :host { display: flex; position: relative; height: 48px; color: #fff; font-family: "Open Sans", "Noto Sans", sans-serif; overflow: hidden; background: linear-gradient(90deg, #2d3b4e 0, #2c4054 14%, #2f4b5a 26%, #36505f 34%, #44607f 41%, #45658f 46%, #3f6086 54%, #355a78 64%, #2b4b60 72%, #27445a 80%, #2b4559 92%, #2b4054 100%); }
    .wall { position: absolute; inset: 0; }
    .row { position: relative; display: flex; flex: 1; }
    .cell { width: 73px; height: 48px; display: flex; justify-content: center; align-items: center; flex: none; box-sizing: border-box; position: relative; }
    .wide { width: 62px; } .ie { width: 71px; }
    .cell > svg { width: 40px; height: 48px; overflow: visible; position: relative; }
    .box { position: absolute; top: 1px; bottom: 1px; left: 2px; width: 70px; box-sizing: border-box; border: 1px solid rgba(220,228,238,.55); background: rgba(255,255,255,.17); }
    .one .box { width: 65px; } .three .box { width: 62px; }
    .one .box::after, .three .box::after { content: ""; position: absolute; top: -1px; bottom: -1px; left: 100%; width: 4px; box-sizing: border-box; border: 1px solid rgba(220,228,238,.5); border-left: 0; }
    .three .box::after { width: 9px; background: linear-gradient(90deg, transparent 4px, rgba(220,228,238,.5) 4px, rgba(220,228,238,.5) 5px, transparent 5px); }
    .lit .box { background: rgba(255,255,255,.35); border-color: #e8edf3; }
    .one > svg, .three > svg { right: 2px; }
    .tray { position: relative; width: 322px; flex: none; display: flex; }
    .clock { width: 96px; margin-left: 2px; text-align: center; font-size: 15.500px; line-height: 22px; padding-top: 4px; letter-spacing: -.5px; }
  `;
  streaks() {
    const r = rnd(12);
    const out: TemplateResult[] = [];
    for (let i = 0; i < 30; i++) {
      const x = 690 + r() * 300;
      out.push(svg`<path d=${`M${x} 50 ${x + 85 + r() * 30} -2`} stroke="#a9bdd6" stroke-opacity=${0.08 + r() * 0.26} stroke-width=${1 + r() * 8}/>`);
    }
    for (let i = 0; i < 300; i++) {
      const x = r() * 1920;
      const y = r() * 48;
      const far = x > 960;
      out.push(svg`<path d=${`M${x} ${y}q${(r() - 0.5) * 40} ${(r() - 0.5) * 18} ${(r() - 0.5) * (far ? 110 : 50)} ${(r() - 0.5) * 50}`} fill="none" stroke=${r() > 0.45 ? "#5d8fa0" : "#1c3442"} stroke-opacity=${far ? 0.3 : 0.13} stroke-width=${0.7 + r() * 1.6}/>`);
    }
    return out;
  }
  render() {
    return html`
      <svg class="wall" width="1920" height="48">${this.streaks()}<path d="M0 .5H1920" stroke="#1e3040" stroke-opacity=".7"/></svg>
      <div class="row">${TASKS.map((t) => html`<div class="cell ${t.kind}">${t.kind.startsWith("frame") ? html`<span class="box"></span>` : ""}<svg viewBox="0 0 40 48">${t.art}</svg></div>`)}</div>
      <div class="tray">
        <svg width="222" height="48">
          <defs><radialGradient id="q"><stop offset=".3" stop-color="#0a1a4a"/><stop offset=".8" stop-color="#0f3c86"/><stop offset="1" stop-color="#3aa3ea"/></radialGradient></defs>
          <circle cx="16" cy="25" r="15.500" fill="url(#q)"/><text x="9.300" y="34.500" font-family="Open Sans" font-weight="700" font-size="27" fill="#fff">?</text>
          <path d="M50.500 27.500 55.500 22l5 5.500z" fill="#eee"/>
          <path d="M81 17V34" stroke="#fff" stroke-width="1.800"/><path d="M82 17q5-1 8 1.500 3 2.500 7 .5-1 3-3 6-4 0-6-1-3-1-6 0z" fill="#f2f2f2"/>
          <path d="M109 19.500l7-1v7.500h-7zM117 18.300l10-1.500V26H117zM109 27h7v7.500l-7-1zM117 27h10v7.500l-10-1.300z" fill="#fff" />
          <path d="M149 19.200h2V17.500h3v1.700h2.500V34.500H148V19.200z" fill="none" stroke="#fff" stroke-width="1.400"/><path d="M150 23.500h4.700V32.500H150z" fill="#fff"/><path d="M140.500 17v4M144 17v4" stroke="#fff" stroke-width="1.200"/><path d="M139 20.500h6.500v3.500l-2.300 2v8h-1.800v-8l-2.400-2z" fill="#fff"/>
          <path d="M169 34v-3M172.200 34v-5.500M175.400 34v-8.500M178.600 34v-12M181.800 34V18" stroke="#fff" stroke-width="2"/>
          <path d="M197.500 21.500h3l6-5V34.500l-6-5h-3z" fill="#eee"/><path d="M208.500 23q1.500 2.500 0 5M211 21q2.500 4 0 8.500M213.500 19q4 6 0 12" fill="none" stroke="#dde5ea" stroke-width="1.200"/>
        </svg>
        <div class="clock">9:50 AM<br />9/17/2015</div>
      </div>`;
  }
}

@customElement("app-root")
class AppRoot extends LitElement {
  static styles = css`
    :host { display: flex; flex-direction: column; width: 1920px; height: 1080px; overflow: hidden; background: #fff; }
    browser-chrome, task-bar { flex: none; }
    .view { flex: 1; min-height: 0; display: flex; overflow: hidden; }
    .page { flex: 1; min-width: 0; padding: 37px 0 0 23px; overflow: hidden; display: flex; flex-direction: column; align-items: flex-start; }
    .page > * { flex: none; }
    h1 { margin: 0; width: 750px; height: 47px; border-radius: 23.500px; background: #ffb6c1; }
    h1 svg { display: block; font: 700 41px "Liberation Serif", serif; }
    .form { display: flex; align-items: flex-start; margin-top: 27px; height: 93px; }
    .field { box-sizing: border-box; width: 312px; height: 65px; margin: 1px 5px 0 0; border: 5px solid #f4f3ef; border-radius: 4px; padding: 0 20px; font: 21px/53px "Liberation Sans", Arial, sans-serif; color: #000; }
    .field + .field { width: 313px; margin-right: 4px; }
    .btn { box-sizing: border-box; height: 70px; border: 2px solid; border-color: #dcdcdc #868686 #868686 #dcdcdc; border-radius: 7px; background: #f5f5f5; font: 16.650px/66px "Liberation Sans", Arial, sans-serif; text-align: center; color: #000; white-space: nowrap; }
    .dir { width: 113px; margin-left: 16px; }
    .src { width: 188px; margin: 0 0 26px 15px; }
    .halo { margin: 28px 0 26px 14px; border: 1px solid #8fb4f0; border-radius: 2px; padding: 0; }
    .dst { width: 215px; }
    .now { display: flex; align-items: flex-start; gap: 16px; margin-top: 52px; height: 54px; padding-left: 3px; }
    .now b { font: 700 22.600px/26px "Liberation Serif", serif; padding-top: 34px; letter-spacing: .35px; }
    .scroll { flex: none; width: 21px; background: #f1f1f1; display: flex; flex-direction: column; align-items: center; justify-content: space-between; padding: 0; }
    .scroll svg { display: block; }
    .thumb { width: 18px; height: 770px; box-sizing: border-box; background: #bcbcbc; border: 1px solid #a6a6a6; }
    .gap { flex: 1; }
  `;
  heading(text: string, x: number, w: number) {
    return html`<h1><svg width="750" height="47"><text x=${x - 23} y="38" textLength=${w} lengthAdjust="spacingAndGlyphs">${text}</text></svg></h1>`;
  }
  render() {
    const rays = Array.from({ length: 18 }, (_, i) => i * 20);
    return html`
      <browser-chrome></browser-chrome>
      <div class="view">
        <div class="page">
          ${this.heading("Weather for Source and Destination", 69, 657)}
          <div class="form">
            <div class="field">kansas city</div><div class="field">dallas</div>
            <div class="btn dir">Get Direction</div>
          </div>
          <route-map></route-map>
          <div class="btn src">Get weather for Source</div>
          ${this.heading("Forecast For Kansas City", 174, 449)}
          <div class="now">
            <svg width="50" height="52" viewBox="-25 -26 50 52">
              <defs><radialGradient id="sun" cy=".7"><stop offset="0" stop-color="#fffef0"/><stop offset=".6" stop-color="#fff38c"/><stop offset="1" stop-color="#f5c02c"/></radialGradient></defs>
              ${rays.map((a, i) => svg`<path transform=${`rotate(${a})`} d=${i % 2 ? "M-3.500-14 0-21 3.500-14z" : "M-3-14 0-25 3-14z"} fill="#f3e08a" stroke="#8c8870" stroke-width=".8"/>`)}
              <circle r="16" fill="#f3b530"/><circle r="14" fill="url(#sun)"/><path d="M-13-3q13-4 26 0 0-4-5-8Q0-16-8-11q-5 4-5 8z" fill="#e9e6dc" opacity=".85"/><path d="M-13-1.500q13-3 26 0" stroke="#d5cfae" fill="none"/>
            </svg>
            <b>Current: Fair | 79F</b>
          </div>
          <div class="halo"><div class="btn dst">Get weather for destination</div></div>
          ${this.heading("Forecast For Dallas", 222, 351)}
        </div>
        <div class="scroll">
          <svg width="21" height="30"><path d="M7 13.500 10.500 9.500 14 13.500z" fill="#444"/></svg>
          <div class="thumb"></div><div class="gap"></div>
          <svg width="21" height="20"><path d="M7 7 10.500 11 14 7z" fill="#444"/></svg>
        </div>
      </div>
      <task-bar></task-bar>`;
  }
}
